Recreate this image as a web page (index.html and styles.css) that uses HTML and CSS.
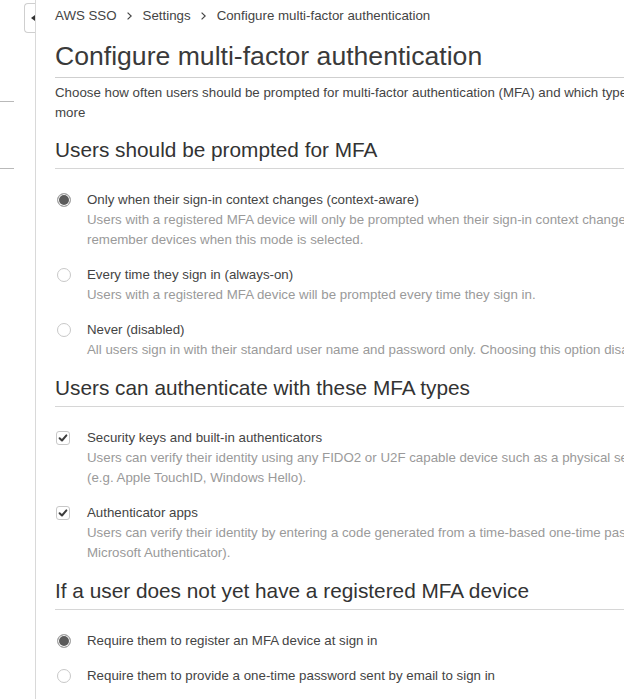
FILE: index.html
```html
<!DOCTYPE html>
<html lang="en">
<head>
<meta charset="utf-8">
<title>Configure multi-factor authentication</title>
<link rel="stylesheet" href="styles.css">
</head>
<body>
<div class="layout">
  <aside class="sidebar">
    <div class="toggle"><span class="toggle-arrow"></span></div>
    <hr class="nav-sep nav-sep-first">
    <hr class="nav-sep nav-sep-second">
  </aside>
  <main class="content">
    <nav class="breadcrumb">
      <span class="crumb">AWS SSO</span>
      <svg class="crumb-sep" width="5" height="8" viewBox="0 0 5 8"><polyline points="0.6,0.6 4.2,4 0.6,7.4" fill="none" stroke="#444" stroke-width="1.2"/></svg>
      <span class="crumb">Settings</span>
      <svg class="crumb-sep" width="5" height="8" viewBox="0 0 5 8"><polyline points="0.6,0.6 4.2,4 0.6,7.4" fill="none" stroke="#444" stroke-width="1.2"/></svg>
      <span class="crumb crumb-current">Configure multi-factor authentication</span>
    </nav>

    <h1 class="page-title">Configure multi-factor authentication</h1>
    <p class="intro">Choose how often users should be prompted for multi-factor authentication (MFA) and which types of MFA devices they can use. Learn<br>more</p>

    <section class="group">
      <h2 class="group-title">Users should be prompted for MFA</h2>
      <div class="options">
        <div class="option">
          <span class="control"><span class="radio checked"></span></span>
          <div class="option-body">
            <div class="option-label">Only when their sign-in context changes (context-aware)</div>
            <div class="option-desc">Users with a registered MFA device will only be prompted when their sign-in context changes. Users will be able to<br>remember devices when this mode is selected.</div>
          </div>
        </div>
        <div class="option">
          <span class="control"><span class="radio"></span></span>
          <div class="option-body">
            <div class="option-label">Every time they sign in (always-on)</div>
            <div class="option-desc">Users with a registered MFA device will be prompted every time they sign in.</div>
          </div>
        </div>
        <div class="option">
          <span class="control"><span class="radio"></span></span>
          <div class="option-body">
            <div class="option-label">Never (disabled)</div>
            <div class="option-desc">All users sign in with their standard user name and password only. Choosing this option disables MFA.</div>
          </div>
        </div>
      </div>
    </section>

    <section class="group">
      <h2 class="group-title">Users can authenticate with these MFA types</h2>
      <div class="options">
        <div class="option">
          <span class="control"><span class="checkbox"><svg width="12" height="12" viewBox="0 0 12 12"><path d="M2.6 6.2 L5 8.5 L9.4 3.4" fill="none" stroke="#3d3d3d" stroke-width="2" stroke-linecap="round" stroke-linejoin="round"/></svg></span></span>
          <div class="option-body">
            <div class="option-label">Security keys and built-in authenticators</div>
            <div class="option-desc">Users can verify their identity using any FIDO2 or U2F capable device such as a physical security key or built-in authenticator<br>(e.g. Apple TouchID, Windows Hello).</div>
          </div>
        </div>
        <div class="option">
          <span class="control"><span class="checkbox"><svg width="12" height="12" viewBox="0 0 12 12"><path d="M2.6 6.2 L5 8.5 L9.4 3.4" fill="none" stroke="#3d3d3d" stroke-width="2" stroke-linecap="round" stroke-linejoin="round"/></svg></span></span>
          <div class="option-body">
            <div class="option-label">Authenticator apps</div>
            <div class="option-desc">Users can verify their identity by entering a code generated from a time-based one-time password app (e.g. Google Authenticator,<br>Microsoft Authenticator).</div>
          </div>
        </div>
      </div>
    </section>

    <section class="group">
      <h2 class="group-title">If a user does not yet have a registered MFA device</h2>
      <div class="options">
        <div class="option">
          <span class="control"><span class="radio checked"></span></span>
          <div class="option-body">
            <div class="option-label">Require them to register an MFA device at sign in</div>
          </div>
        </div>
        <div class="option">
          <span class="control"><span class="radio"></span></span>
          <div class="option-body">
            <div class="option-label">Require them to provide a one-time password sent by email to sign in</div>
          </div>
        </div>
      </div>
    </section>
  </main>
</div>
</body>
</html>
```

FILE: styles.css
```css
html, body {
  margin: 0;
  padding: 0;
  overflow: hidden;
  background: #fff;
}

body {
  font-family: "Liberation Sans", Arial, sans-serif;
  font-size: 13.3px;
  color: #444;
}

.layout {
  display: flex;
  align-items: stretch;
  min-height: 699px;
}

.sidebar {
  flex: none;
  width: 36px;
  box-sizing: border-box;
  border-right: 1px solid #d9d9d9;
  display: flex;
  flex-direction: column;
}

.toggle {
  margin: 3px 0 0 24px;
  width: 11px;
  height: 30px;
  box-sizing: border-box;
  border: 1px solid #cfcfcf;
  border-right: none;
  border-radius: 4px 0 0 4px;
  background: #fff;
  display: flex;
  align-items: center;
  justify-content: flex-end;
}

.toggle-arrow {
  width: 0;
  height: 0;
  border-top: 3px solid transparent;
  border-bottom: 3px solid transparent;
  border-right: 4px solid #333;
}

.nav-sep {
  width: 14px;
  margin: 0;
  border: none;
  border-top: 1px solid #b9b9b9;
}

.nav-sep-first {
  margin-top: 68px;
}

.nav-sep-second {
  margin-top: 66px;
}

.content {
  flex: none;
  width: 1200px;
  padding: 6px 0 0 19px;
  box-sizing: border-box;
}

.breadcrumb {
  display: flex;
  align-items: center;
  height: 20px;
  line-height: 20px;
  color: #444;
  white-space: nowrap;
}

.crumb-sep {
  display: block;
  margin: 0 11px 0 10px;
}

.page-title {
  margin: 14px 0 0;
  font-size: 26.6px;
  line-height: 32px;
  font-weight: normal;
  color: #3a3a3a;
  padding-bottom: 5px;
  border-bottom: 1px solid #cfcfcf;
}

.intro {
  margin: 5px 0 0;
  line-height: 20px;
  color: #444;
  white-space: nowrap;
}

.group-title {
  margin: 0;
  font-size: 20.8px;
  line-height: 25px;
  font-weight: normal;
  color: #333;
  padding-bottom: 6px;
  border-bottom: 1px solid #d6d6d6;
}

.group:first-of-type .group-title {
  margin-top: 14px;
}

.group + .group {
  margin-top: 15px;
}

.options {
  margin-top: 21px;
  display: flex;
  flex-direction: column;
  gap: 15px;
}

.option {
  display: flex;
  align-items: flex-start;
}

.control {
  flex: none;
  width: 32px;
  height: 20px;
  display: flex;
  align-items: center;
}

.radio {
  margin-left: 2px;
  width: 14px;
  height: 14px;
  box-sizing: border-box;
  border-radius: 50%;
  border: 1px solid #c8c8c8;
  background: #fff;
}

.radio.checked {
  border-color: #a9a9a9;
  background: #5b5b5b;
  box-shadow: inset 0 0 0 1px #fff;
}

.checkbox {
  margin-left: 1px;
  width: 14px;
  height: 14px;
  box-sizing: border-box;
  border: 1px solid #c8c8c8;
  border-radius: 3px;
  background: #fff;
  display: flex;
  align-items: center;
  justify-content: center;
}

.checkbox svg {
  display: block;
}

.option-body {
  white-space: nowrap;
}

.option-label {
  line-height: 20px;
  color: #444;
}

.option-desc {
  line-height: 20px;
  color: #9a9a9a;
}
```
